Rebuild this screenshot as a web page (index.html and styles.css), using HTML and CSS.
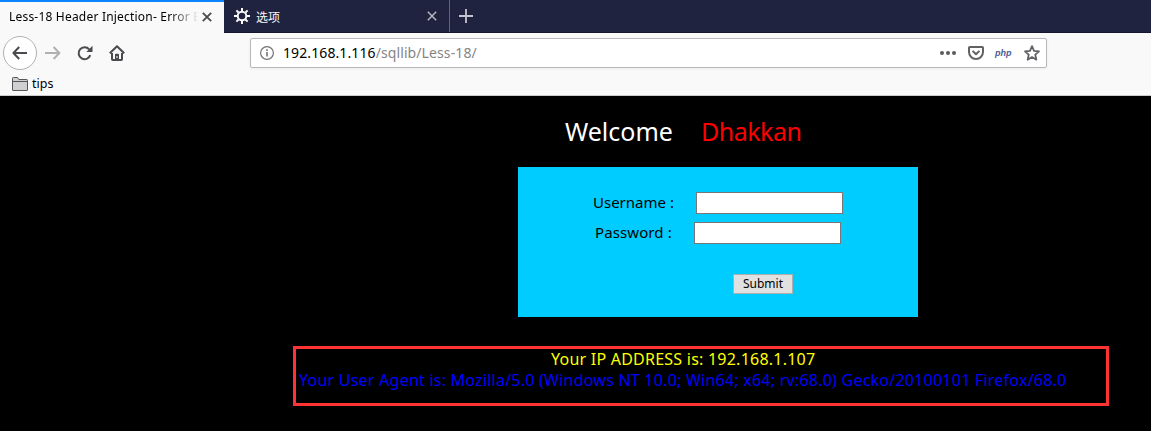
FILE: index.html
```html
<!DOCTYPE html>
<html lang="en">
<head>
<meta charset="utf-8">
<title>Less-18 Header Injection- Error Based</title>
<link rel="stylesheet" href="styles.css">
</head>
<body>
<header class="chrome">
  <div class="tabs">
    <div class="tab tab-active">
      <span class="tab-title">Less-18 Header Injection- Error B</span>
      <svg class="close" width="10" height="10" viewBox="0 0 10 10"><path d="M.8.8l8.4 8.4M9.2.8L.8 9.2"/></svg>
    </div>
    <div class="tab tab-options">
      <svg class="gear" width="16" height="16" viewBox="0 0 16 16"><circle cx="8" cy="8" r="4.3"/><path d="M8 0v3M8 13v3M0 8h3M13 8h3M2.4 2.4l2.1 2.1M11.5 11.5l2.1 2.1M13.6 2.4l-2.1 2.1M4.500 11.500l-2.100 2.100"/></svg>
      <span class="options-title">选项</span>
      <svg class="close" width="10" height="10" viewBox="0 0 10 10"><path d="M.8.8l8.4 8.4M9.2.8L.8 9.2"/></svg>
    </div>
    <svg class="plus" width="14" height="14" viewBox="0 0 14 14"><path d="M7 0v14M0 7h14"/></svg>
  </div>
  <div class="toolbar">
    <span class="back"><svg class="icon" width="16" height="16" viewBox="0 0 16 16"><path d="M15 8H1.600M7.200 2L1.400 8l5.800 6"/></svg></span>
    <svg class="icon forward" width="16" height="16" viewBox="0 0 16 16"><path d="M0 8h14.200M8.600 2l5.800 6-5.800 6"/></svg>
    <svg class="icon reload" width="16" height="16" viewBox="0 0 16 16"><path d="M12.200 4.300A6 6 0 1 0 13.300 10.200"/><path class="solid" d="M15.500.8v6.100H9.400z"/></svg>
    <svg class="icon home" width="16" height="16" viewBox="0 0 16 16"><path d="M.8 8.300L8 1.200l7.200 7.100M3 8v6.200q0 .8.800.8h8.400q.8 0 .8-.8V8"/><path class="solid" d="M6 15V9.500q0-.7.7-.7h2.600q.7 0 .7.7V15z"/><path class="spot" d="M8 11v2"/></svg>
    <div class="urlbar">
      <svg class="info" width="14" height="14" viewBox="0 0 14 14"><circle cx="7" cy="7" r="6.400"/><path d="M7 6v4.600M7 3.200v1.700"/></svg>
      <span class="url"><span class="host">192.168.1.116</span>/sqllib/Less-18/</span>
      <svg class="dots" width="16" height="4" viewBox="0 0 16 4"><circle cx="2" cy="2" r="2"/><circle cx="8" cy="2" r="2"/><circle cx="14" cy="2" r="2"/></svg>
      <svg class="icon pocket" width="16" height="14" viewBox="0 0 16 14"><path d="M1.800 1h12.400q.8 0 .8.800V6A7 7 0 0 1 1 6V1.800Q1 1 1.800 1zM4.600 4.900L8 8.200l3.400-3.300"/></svg>
      <span class="php">php</span>
      <svg class="icon star" width="16" height="16" viewBox="0 0 16 16"><path d="M8 1.200l2 4.600 5 .5-3.700 3.400 1 5L8 12.100l-4.300 2.600 1-5L1 6.300l5-.5z"/></svg>
    </div>
  </div>
  <div class="bookmarks">
    <svg class="folder" width="16" height="14" viewBox="0 0 16 14"><path d="M.5 13V1.300Q.5.5 1.300.5h4.200l1.300 2h7.900q.8 0 .8.800V13q0 .5-.5.5H1q-.5 0-.5-.5z"/><path d="M.5 4.500h15"/></svg>
    <span class="bookmark-label">tips</span>
  </div>
</header>
<main class="page">
  <h1 class="welcome"><span class="greeting">Welcome</span><span class="name">Dhakkan</span></h1>
  <form class="login">
    <div class="row user-row"><label class="label" for="u">Username :</label><input class="field" id="u" type="text"></div>
    <div class="row pass-row"><label class="label" for="p">Password :</label><input class="field" id="p" type="text"></div>
    <button class="submit" type="button">Submit</button>
  </form>
  <section class="result">
    <p class="ip">Your IP ADDRESS is: 192.168.1.107</p>
    <p class="agent">Your User Agent is: Mozilla/5.0 (Windows NT 10.0; Win64; x64; rv:68.0) Gecko/20100101 Firefox/68.0</p>
  </section>
</main>
</body>
</html>
```
FILE: styles.css
```css
* { box-sizing: border-box; }
body { margin: 0; width: 1151px; height: 431px; overflow: hidden; background: #000; color: #000; font-family: "Noto Sans", "Noto Sans CJK SC", sans-serif; }
svg { display: block; flex: none; fill: none; }
.chrome { height: 96px; background: #f9f9fa; border-bottom: 1px solid #ccc; }
.tabs { display: flex; height: 33px; background: #202340; border-bottom: 1px solid #14162f; }
.tab { display: flex; align-items: center; height: 33px; flex: none; }
.tab-active { width: 224px; padding: 0 0 2px 9px; background: #f9f9fa; border-top: 2px solid #0a84ff; }
.tab-title { width: 188px; margin-right: 5px; white-space: nowrap; font-size: 12px; letter-spacing: 0.2px; -webkit-mask-image: linear-gradient(to right, #000 160px, transparent 190px); mask-image: linear-gradient(to right, #000 160px, transparent 190px); }
.close { stroke: #4a4a4f; stroke-width: 1.8; }
.tab-options { width: 226px; height: 32px; padding-left: 10px; border-right: 1px solid #62647a; color: #f9f9fa; }
.gear { stroke: #f9f9fa; stroke-width: 2; }
.options-title { width: 171px; margin-left: 6px; font: 12px "Noto Sans CJK SC", sans-serif; }
.tab-options .close { stroke: #b5b5c0; stroke-width: 1.5; }
.plus { margin: 9px 0 0 9px; stroke: #c4c4d0; stroke-width: 1.8; }
.toolbar { display: flex; align-items: center; height: 40px; padding-left: 3px; }
.icon { stroke: #4a4a4f; stroke-width: 2; stroke-linejoin: round; }
.back { display: flex; align-items: center; justify-content: center; width: 34px; height: 34px; border: 1px solid #b1b1b3; border-radius: 50%; background: #fff; }
.forward { margin-left: 8px; stroke: #b1b1b3; }
.reload { margin-left: 16px; }
.home { margin-left: 16px; }
.solid { fill: #4a4a4f; stroke: none; }
.spot { stroke: #f9f9fa; stroke-width: 1; }
.urlbar { display: flex; align-items: center; width: 797px; height: 30px; margin-left: 125px; padding-left: 9px; border: 1px solid #b8b8ba; border-radius: 2px; background: #fff; box-shadow: 0 1px 3px rgba(0,0,0,.06); }
.info { stroke: #737373; stroke-width: 1.2; }
.info path { stroke-width: 1.6; }
.url { width: 657px; margin-left: 9px; padding-bottom: 1px; color: #858585; font-size: 14px; letter-spacing: 0.1px; white-space: nowrap; }
.host { color: #000; }
.dots { fill: #5b5b5f; }
.pocket { margin-left: 12px; stroke: #626266; }
.php { width: 18px; margin-left: 11px; color: #4f5b93; font: italic bold 9px/14px "Liberation Sans", sans-serif; }
.star { margin-left: 11px; stroke: #626266; stroke-width: 1.8; }
.bookmarks { display: flex; align-items: center; height: 21px; padding-left: 12px; }
.folder { fill: #d0d0d2; stroke: #55555a; }
.bookmark-label { margin-left: 4px; font-size: 12.5px; }
.page { display: flex; flex-direction: column; height: 335px; }
.welcome { display: flex; height: 71px; margin: 0; padding-left: 565px; font-size: 25px; font-weight: 400; line-height: 71px; white-space: nowrap; }
.greeting { width: 136px; color: #fff; }
.name { color: #f00; letter-spacing: -0.5px; }
.login { width: 400px; height: 150px; margin-left: 518px; padding-top: 25px; background: #0cf; }
.row { display: flex; align-items: center; height: 22px; margin-bottom: 8px; font-size: 15px; line-height: 20px; white-space: nowrap; }
.user-row { padding-left: 75px; }
.pass-row { padding-left: 77px; }
.label { padding-bottom: 2px; }
.user-row .label { width: 103px; }
.pass-row .label { width: 99px; letter-spacing: 0.1px; }
.field { width: 147px; height: 22px; padding: 1px; border: 1px solid #777; background: #fff; }
.submit { display: block; width: 60px; height: 20px; margin: 30px 0 0 215px; padding: 0; border: 1px solid #adadad; background: #e1e1e1; color: #000; font: 12px/18px "Noto Sans", sans-serif; }
.result { width: 816px; height: 60px; margin: 29px 0 0 293px; border: 3px solid #f33; font-size: 16px; line-height: 21px; letter-spacing: 0.235px; white-space: nowrap; }
.ip, .agent { margin: 0; }
.ip { padding-left: 255px; color: #ff0; }
.agent { padding-left: 3px; color: #00f; }
```
